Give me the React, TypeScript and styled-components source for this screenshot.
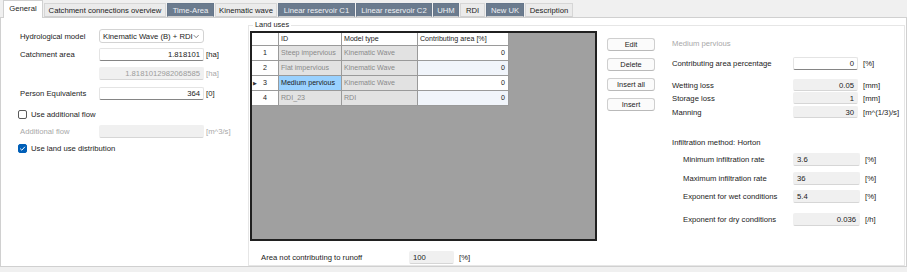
import React from "react";
import styled, { createGlobalStyle } from "styled-components";

const GlobalStyle = createGlobalStyle`
  * { box-sizing: border-box; }
  html, body { margin: 0; padding: 0; background: #f0f0f0; }
  body {
    font-family: "Liberation Sans", Arial, sans-serif;
    font-size: 7.7px;
    color: #1b1b1b;
  }
`;

const Window = styled.div`
  width: 907px;
  height: 272px;
  background: #f0f0f0;
  display: flex;
  flex-direction: column;
  overflow: hidden;
`;

const TabBar = styled.div`
  height: 17px;
  display: flex;
  align-items: flex-end;
  gap: 1px;
  padding-left: 3px;
  position: relative;
  z-index: 1;
`;

const Tab = styled.div<{ $w: number; $active?: boolean; $dark?: boolean }>`
  width: ${(p) => p.$w}px;
  height: ${(p) => (p.$active ? 18 : 14)}px;
  margin-bottom: ${(p) => (p.$active ? -1 : 0)}px;
  display: flex;
  align-items: center;
  justify-content: center;
  white-space: nowrap;
  background: ${(p) => (p.$active ? "#ffffff" : p.$dark ? "#6b7b8e" : "#ebebeb")};
  color: ${(p) => (p.$dark ? "#eef1f5" : "#222222")};
  border: 1px solid ${(p) => (p.$active ? "#d0d0d0" : p.$dark ? "#66768a" : "#d6d6d6")};
  border-bottom: ${(p) => (p.$active ? "none" : "1px solid #d0d0d0")};
  padding-bottom: ${(p) => (p.$active ? 2 : 0)}px;
`;

const Page = styled.div`
  height: 250px;
  background: #ffffff;
  border: 1px solid #d0d0d0;
  display: flex;
`;

const LeftPanel = styled.div`
  width: 247px;
  flex: none;
  padding: 11px 0 0 19px;
  display: flex;
  flex-direction: column;
`;

const FieldRow = styled.div<{ $mt?: number; $h?: number }>`
  display: grid;
  grid-template-columns: 77px 105px auto;
  column-gap: 2px;
  align-items: center;
  height: ${(p) => p.$h ?? 13}px;
  margin-top: ${(p) => p.$mt ?? 0}px;
`;

const Label = styled.span<{ $disabled?: boolean }>`
  color: ${(p) => (p.$disabled ? "#a8a8a8" : "#1b1b1b")};
  white-space: nowrap;
`;

const Unit = styled.span<{ $disabled?: boolean }>`
  color: ${(p) => (p.$disabled ? "#a8a8a8" : "#1b1b1b")};
  white-space: nowrap;
`;

const Field = styled.div<{ $variant?: "edit" | "ro"; $align?: "left" | "right"; $dim?: boolean }>`
  height: 100%;
  display: flex;
  align-items: center;
  justify-content: ${(p) => (p.$align === "left" ? "flex-start" : "flex-end")};
  padding: 0 3px;
  white-space: nowrap;
  overflow: hidden;
  border-radius: 2px;
  color: ${(p) => (p.$dim ? "#9c9c9c" : "#1b1b1b")};
  background: ${(p) => (p.$variant === "ro" ? "#f0f0f0" : "#ffffff")};
  border: 1px solid ${(p) => (p.$variant === "ro" ? "#f0f0f0" : "#e4e4e4")};
  border-bottom-color: ${(p) => (p.$variant === "ro" ? "#d6d6d6" : "#858585")};
`;

const Combo = styled.div`
  height: 100%;
  display: flex;
  align-items: center;
  justify-content: space-between;
  padding: 0 4px 0 3px;
  background: #ffffff;
  border: 1px solid #d3d3d3;
  border-radius: 3px;
  white-space: nowrap;
`;

const CheckRow = styled.label<{ $mt?: number }>`
  display: flex;
  align-items: center;
  gap: 4px;
  height: 12px;
  margin-top: ${(p) => p.$mt ?? 0}px;
  margin-left: -2px;
`;

const Box = styled.span<{ $checked?: boolean }>`
  width: 9px;
  height: 9px;
  border-radius: 2px;
  display: flex;
  align-items: center;
  justify-content: center;
  background: ${(p) => (p.$checked ? "#005fb8" : "#ffffff")};
  border: 1px solid ${(p) => (p.$checked ? "#005fb8" : "#5a5a5a")};
`;

const Group = styled.fieldset`
  flex: 1;
  min-width: 0;
  margin: 3px 1px 0 0;
  padding: 2px 0 0 1px;
  border: 1px solid #e6e6e6;
  display: flex;
  flex-direction: column;
`;

const Legend = styled.legend`
  margin-left: 3px;
  padding: 0 2px;
  line-height: 8px;
  font-size: 7.4px;
  color: #1b1b1b;
`;

const TopArea = styled.div`
  display: flex;
  align-items: flex-start;
`;

const GridFrame = styled.div`
  width: 347px;
  height: 210px;
  flex: none;
  border: 2px solid #202020;
  background: #a0a0a0;
`;

const Table = styled.div`
  display: grid;
  grid-template-columns: 27px 63px 76px 91px;
  grid-template-rows: 13px;
  grid-auto-rows: 15px;
  width: 257px;
  font-size: 7.1px;
`;

type CellKind = "head" | "rowhead" | "ro" | "value" | "valueAlt" | "selected";

const cellBg: Record<CellKind, string> = {
  head: "#ffffff",
  rowhead: "#ffffff",
  ro: "#e2e2e2",
  value: "#ffffff",
  valueAlt: "#f1f5fb",
  selected: "#99d1ff",
};

const Cell = styled.div<{ $kind: CellKind }>`
  display: flex;
  align-items: center;
  white-space: nowrap;
  overflow: hidden;
  border-right: 1px solid #9a9a9a;
  border-bottom: 1px solid #9a9a9a;
  background: ${(p) => cellBg[p.$kind]};
  color: ${(p) => (p.$kind === "ro" ? "#8a8a8a" : "#1b1b1b")};
  justify-content: ${(p) =>
    p.$kind === "value" || p.$kind === "valueAlt" ? "flex-end" : p.$kind === "rowhead" ? "center" : "flex-start"};
  padding: ${(p) =>
    p.$kind === "value" || p.$kind === "valueAlt" ? "0 3px 0 0" : p.$kind === "rowhead" ? "0" : "0 0 0 2px"};
  position: relative;
`;

const RowMarker = styled.span`
  position: absolute;
  left: 1px;
  top: 50%;
  transform: translateY(-50%);
  font-size: 5px;
  color: #333;
`;

const ButtonCol = styled.div`
  margin-left: 10px;
  padding-top: 7px;
  display: flex;
  flex-direction: column;
  gap: 7px;
`;

const Button = styled.button`
  width: 48px;
  height: 13px;
  padding: 0;
  font-family: inherit;
  font-size: 7.4px;
  color: #1b1b1b;
  background: #fbfbfb;
  border: 1px solid #cfcfcf;
  border-bottom-color: #b9b9b9;
  border-radius: 3px;
`;

const Details = styled.div`
  margin-left: 17px;
  padding-top: 6px;
  display: flex;
  flex-direction: column;
`;

const Title = styled.div<{ $mt?: number; $dim?: boolean }>`
  height: 12px;
  display: flex;
  align-items: center;
  margin-top: ${(p) => p.$mt ?? 0}px;
  color: ${(p) => (p.$dim ? "#a8a8a8" : "#1b1b1b")};
`;

const DetailRow = styled.div<{ $mt?: number; $h?: number; $indent?: boolean }>`
  display: grid;
  grid-template-columns: ${(p) => (p.$indent ? "105px 67px auto" : "116px 65px auto")};
  column-gap: 5px;
  align-items: center;
  padding-left: ${(p) => (p.$indent ? 11 : 0)}px;
  height: ${(p) => p.$h ?? 13}px;
  margin-top: ${(p) => p.$mt ?? 0}px;
`;

const BottomRow = styled.div`
  display: grid;
  grid-template-columns: 143px 45px auto;
  column-gap: 5px;
  align-items: center;
  height: 13px;
  margin-top: 10px;
  padding-left: 11px;
`;

const tabs: { label: string; w: number; dark?: boolean; active?: boolean }[] = [
  { label: "General", w: 40, active: true },
  { label: "Catchment connections overview", w: 122 },
  { label: "Time-Area", w: 47, dark: true },
  { label: "Kinematic wave", w: 62 },
  { label: "Linear reservoir C1", w: 77, dark: true },
  { label: "Linear reservoir C2", w: 76, dark: true },
  { label: "UHM", w: 26, dark: true },
  { label: "RDI", w: 25 },
  { label: "New UK", w: 38, dark: true },
  { label: "Description", w: 48 },
];

const rows = [
  { n: "1", id: "Steep impervious", model: "Kinematic Wave", v: "0" },
  { n: "2", id: "Flat impervious", model: "Kinematic Wave", v: "0" },
  { n: "3", id: "Medium pervious", model: "Kinematic Wave", v: "0", current: true },
  { n: "4", id: "RDI_23", model: "RDI", v: "0" },
];

const Chevron = () => (
  <svg width="7" height="5" viewBox="0 0 7 5">
    <path d="M0.8 1 L3.5 3.8 L6.2 1" fill="none" stroke="#555" strokeWidth="0.8" />
  </svg>
);

const Check = () => (
  <svg width="7" height="7" viewBox="0 0 7 7">
    <path d="M1.2 3.6 L2.8 5.2 L5.9 1.8" fill="none" stroke="#fff" strokeWidth="1" />
  </svg>
);

export default function App() {
  return (
    <Window>
      <GlobalStyle />
      <TabBar>
        {tabs.map((t) => (
          <Tab key={t.label} $w={t.w} $dark={t.dark} $active={t.active}>
            {t.label}
          </Tab>
        ))}
      </TabBar>
      <Page>
        <LeftPanel>
          <FieldRow $h={14}>
            <Label>Hydrological model</Label>
            <Combo>
              <span>Kinematic Wave (B) + RDI</span>
              <Chevron />
            </Combo>
          </FieldRow>
          <FieldRow $mt={5}>
            <Label>Catchment area</Label>
            <Field>1.818101</Field>
            <Unit>[ha]</Unit>
          </FieldRow>
          <FieldRow $mt={6}>
            <span />
            <Field $variant="ro" $dim>
              1.8181012982068585
            </Field>
            <Unit $disabled>[ha]</Unit>
          </FieldRow>
          <FieldRow $mt={7}>
            <Label>Person Equivalents</Label>
            <Field>364</Field>
            <Unit>[0]</Unit>
          </FieldRow>
          <CheckRow $mt={8}>
            <Box />
            <Label>Use additional flow</Label>
          </CheckRow>
          <FieldRow $mt={5}>
            <Label $disabled>Additional flow</Label>
            <Field $variant="ro" />
            <Unit $disabled>[m^3/s]</Unit>
          </FieldRow>
          <CheckRow $mt={4}>
            <Box $checked>
              <Check />
            </Box>
            <Label>Use land use distribution</Label>
          </CheckRow>
        </LeftPanel>

        <Group>
          <Legend>Land uses</Legend>
          <TopArea>
            <GridFrame>
              <Table>
                <Cell $kind="head" />
                <Cell $kind="head">ID</Cell>
                <Cell $kind="head">Model type</Cell>
                <Cell $kind="head">Contributing area [%]</Cell>
                {rows.map((r, i) => (
                  <React.Fragment key={r.n}>
                    <Cell $kind="rowhead">
                      {r.current && <RowMarker>▶</RowMarker>}
                      {r.n}
                    </Cell>
                    <Cell $kind={r.current ? "selected" : "ro"}>{r.id}</Cell>
                    <Cell $kind="ro">{r.model}</Cell>
                    <Cell $kind={i % 2 === 1 ? "valueAlt" : "value"}>{r.v}</Cell>
                  </React.Fragment>
                ))}
              </Table>
            </GridFrame>
            <ButtonCol>
              <Button>Edit</Button>
              <Button>Delete</Button>
              <Button>Insert all</Button>
              <Button>Insert</Button>
            </ButtonCol>
            <Details>
              <Title $dim>Medium pervious</Title>
              <DetailRow $mt={8}>
                <Label>Contributing area percentage</Label>
                <Field>0</Field>
                <Unit>[%]</Unit>
              </DetailRow>
              <DetailRow $mt={9} $h={12}>
                <Label>Wetting loss</Label>
                <Field $variant="ro">0.05</Field>
                <Unit>[mm]</Unit>
              </DetailRow>
              <DetailRow $mt={1} $h={12}>
                <Label>Storage loss</Label>
                <Field $variant="ro">1</Field>
                <Unit>[mm]</Unit>
              </DetailRow>
              <DetailRow $mt={2} $h={12}>
                <Label>Manning</Label>
                <Field $variant="ro">30</Field>
                <Unit>[m^(1/3)/s]</Unit>
              </DetailRow>
              <Title $mt={18}>Infiltration method: Horton</Title>
              <DetailRow $indent $mt={5}>
                <Label>Minimum infiltration rate</Label>
                <Field $variant="ro" $align="left">3.6</Field>
                <Unit>[%]</Unit>
              </DetailRow>
              <DetailRow $indent $mt={6}>
                <Label>Maximum infiltration rate</Label>
                <Field $variant="ro" $align="left">36</Field>
                <Unit>[%]</Unit>
              </DetailRow>
              <DetailRow $indent $mt={5}>
                <Label>Exponent for wet conditions</Label>
                <Field $variant="ro" $align="left">5.4</Field>
                <Unit>[%]</Unit>
              </DetailRow>
              <DetailRow $indent $mt={10}>
                <Label>Exponent for dry conditions</Label>
                <Field $variant="ro">0.036</Field>
                <Unit>[/h]</Unit>
              </DetailRow>
            </Details>
          </TopArea>
          <BottomRow>
            <Label>Area not contributing to runoff</Label>
            <Field $variant="ro" $align="left">100</Field>
            <Unit>[%]</Unit>
          </BottomRow>
        </Group>
      </Page>
    </Window>
  );
}
